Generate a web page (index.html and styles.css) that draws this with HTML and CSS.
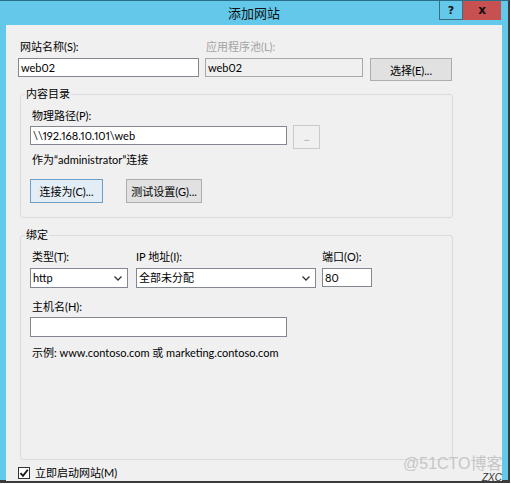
FILE: index.html
```html
<!DOCTYPE html>
<html lang="zh-CN">
<head>
<meta charset="utf-8">
<title>添加网站</title>
<link rel="stylesheet" href="styles.css">
</head>
<body>
<div class="dlg">
  <div class="titlebar">
    <span></span>
    <div class="title">添加网站</div>
    <div class="ctrls"><span class="help">?</span><span class="close">x</span></div>
  </div>
  <div class="main">
    <div class="client">
      <div class="toprow">
        <div class="lbl pad2">网站名称(S):</div>
        <div class="lbl dis pad1">应用程序池(L):</div>
        <div></div>
        <div class="tb w181">web02</div>
        <div class="tb ro w158">web02</div>
        <div class="btn sel">选择(E)...</div>
      </div>

      <fieldset class="grp g1">
        <legend>内容目录</legend>
        <div class="lbl pad2">物理路径(P):</div>
        <div class="pathrow">
          <div class="tb w257">\\192.168.10.101\web</div>
          <div class="btn dots">...</div>
        </div>
        <div class="lbl pad2 asline">作为“administrator”连接</div>
        <div class="btnrow">
          <div class="btn def w73">连接为(C)...</div>
          <div class="btn w76">测试设置(G)...</div>
        </div>
      </fieldset>

      <fieldset class="grp g2">
        <legend>绑定</legend>
        <div class="bindgrid">
          <div class="lbl pad2">类型(T):</div>
          <div class="lbl">IP 地址(I):</div>
          <div class="lbl">端口(O):</div>
          <div class="dd w98"><span>http</span><svg width="8" height="5" viewBox="0 0 8 5"><path d="M0.5 0.5 L4 4 L7.5 0.5" fill="none" stroke="#333" stroke-width="1.3"/></svg></div>
          <div class="dd w180"><span>全部未分配</span><svg width="8" height="5" viewBox="0 0 8 5"><path d="M0.5 0.5 L4 4 L7.5 0.5" fill="none" stroke="#333" stroke-width="1.3"/></svg></div>
          <div class="tb w50">80</div>
        </div>
        <div class="lbl pad2 hostlbl">主机名(H):</div>
        <div class="tb w257 host"></div>
        <div class="lbl pad2 example">示例: www.contoso.com 或 marketing.contoso.com</div>
      </fieldset>

      <div class="chkrow">
        <span class="chk"><svg width="10" height="10" viewBox="0 0 10 10"><path d="M1.5 5.2 L4 7.8 L8.8 1.8" fill="none" stroke="#111" stroke-width="1.8"/></svg></span>
        <span class="chklbl">立即启动网站(M)</span>
      </div>
    </div>
  </div>
  <div class="wm">@51CTO博客</div>
  <div class="sig">ZXC</div>
</div>
</body>
</html>
```
FILE: styles.css
```css
* { box-sizing: border-box; }
html, body { margin: 0; background: #ffffff; }
body {
  font-family: "Lato", "Noto Sans CJK SC", sans-serif;
  font-size: 11px;
  font-variant-numeric: proportional-nums;
  color: #000;
}
.dlg {
  position: relative;
  width: 510px;
  height: 483px;
  display: flex;
  flex-direction: column;
  background: #63c8ea;
  border-top: 1px solid #2a6f88;
  border-right: 2px solid #3b3b3b;
  border-bottom: 3px solid #3b3b3b;
}
.titlebar {
  height: 24px;
  flex: none;
  display: grid;
  grid-template-columns: 1fr auto 1fr;
  align-items: start;
}
.title {
  font-size: 13px;
  line-height: 25px;
  color: #111;
}
.ctrls {
  justify-self: end;
  display: flex;
  margin-right: 7px;
}
.help {
  width: 24px;
  height: 19px;
  border: 1px solid #3b6c80;
  border-top: 0;
  display: flex;
  align-items: center;
  justify-content: center;
  font-family: "DejaVu Sans", sans-serif;
  font-weight: bold;
  font-size: 11px;
  color: #111;
}
.close {
  width: 38px;
  height: 19px;
  background: #c75050;
  display: flex;
  align-items: center;
  justify-content: center;
  font-family: "DejaVu Sans", sans-serif;
  font-weight: bold;
  font-size: 12px;
  line-height: 1;
  color: #111;
  padding-bottom: 2px;
}
.main {
  flex: 1;
  display: flex;
  padding: 0 6px;
}
.client {
  flex: 1;
  background: #f0f0f0;
  padding: 14px 0 0 12px;
}
.lbl { line-height: 16px; white-space: nowrap; }
.pad2 { padding-left: 2px; }
.pad1 { padding-left: 1px; }
.dis { color: #a3a3a3; }

.toprow {
  display: grid;
  grid-template-columns: 181px 158px 83px;
  column-gap: 6px;
  row-gap: 3px;
  align-items: start;
}
.tb {
  height: 19px;
  border: 1px solid #828790;
  background: #fff;
  line-height: 17px;
  padding-left: 2px;
  white-space: nowrap;
}
.tb.ro { background: #f0f0f0; border-color: #a8a8a8; }
.w181 { width: 181px; }
.w158 { width: 158px; }
.w257 { width: 257px; }
.w50 { width: 50px; }
.btn {
  height: 24px;
  border: 1px solid #adadad;
  background: #e1e1e1;
  display: flex;
  align-items: center;
  justify-content: center;
  white-space: nowrap;
}
.sel { height: 23px; margin-left: 1px; }
.w73 { width: 73px; }
.w76 { width: 76px; }
.btn.def { background: #e3edf5; border-color: #6f9ec6; }
.btn.dots {
  width: 27px;
  margin-left: 6px;
  margin-top: -1px;
  background: #f0f0f0;
  border-color: #cacaca;
  color: #a0a0a0;
  font-size: 9px;
  letter-spacing: -0.5px;
}

.grp {
  margin: 5px 0 0 2px;
  width: 433px;
  border: 1px solid #d8dcdf;
  border-radius: 3px;
  padding: 6px 0 14px 9px;
  min-width: 0;
}
.grp legend {
  padding: 0 1px;
  margin-left: -5px;
  line-height: 16px;
}
.pathrow {
  display: flex;
  align-items: flex-start;
  margin-top: 2px;
}
.asline { margin-top: 3px; }
.btnrow {
  display: flex;
  gap: 23px;
  margin-top: 11px;
}
.g2 {
  margin-top: 9px;
  padding-bottom: 98px;
}
.bindgrid {
  display: grid;
  grid-template-columns: 106px 186px 50px;
  row-gap: 3px;
  align-items: start;
}
.dd {
  height: 20px;
  border: 1px solid #828790;
  background: #fff;
  display: flex;
  align-items: center;
  justify-content: space-between;
  padding: 0 5px 0 2px;
  line-height: 18px;
}
.dd svg { margin-top: 1px; }
.w98 { width: 98px; }
.w180 { width: 180px; }
.hostlbl { margin-top: 11px; }
.host { height: 20px; margin-top: 2px; }
.example { margin-top: 8px; }

.chkrow {
  display: flex;
  align-items: center;
  margin-top: 5px;
  line-height: 16px;
}
.chk {
  width: 12px;
  height: 12px;
  border: 1px solid #333;
  background: #fff;
  display: flex;
  align-items: center;
  justify-content: center;
}
.chklbl { margin-left: 5px; }

.wm {
  position: absolute;
  left: 403px;
  top: 456px;
  line-height: 14px;
  font-family: "Liberation Sans", "Noto Sans CJK SC", sans-serif;
  font-size: 16px;
  color: #c6c6c6;
  white-space: nowrap;
}
.sig {
  position: absolute;
  left: 482px;
  top: 473px;
  line-height: 8px;
  font-family: "Liberation Sans", sans-serif;
  font-style: italic;
  font-size: 10px;
  color: #333;
}
```
